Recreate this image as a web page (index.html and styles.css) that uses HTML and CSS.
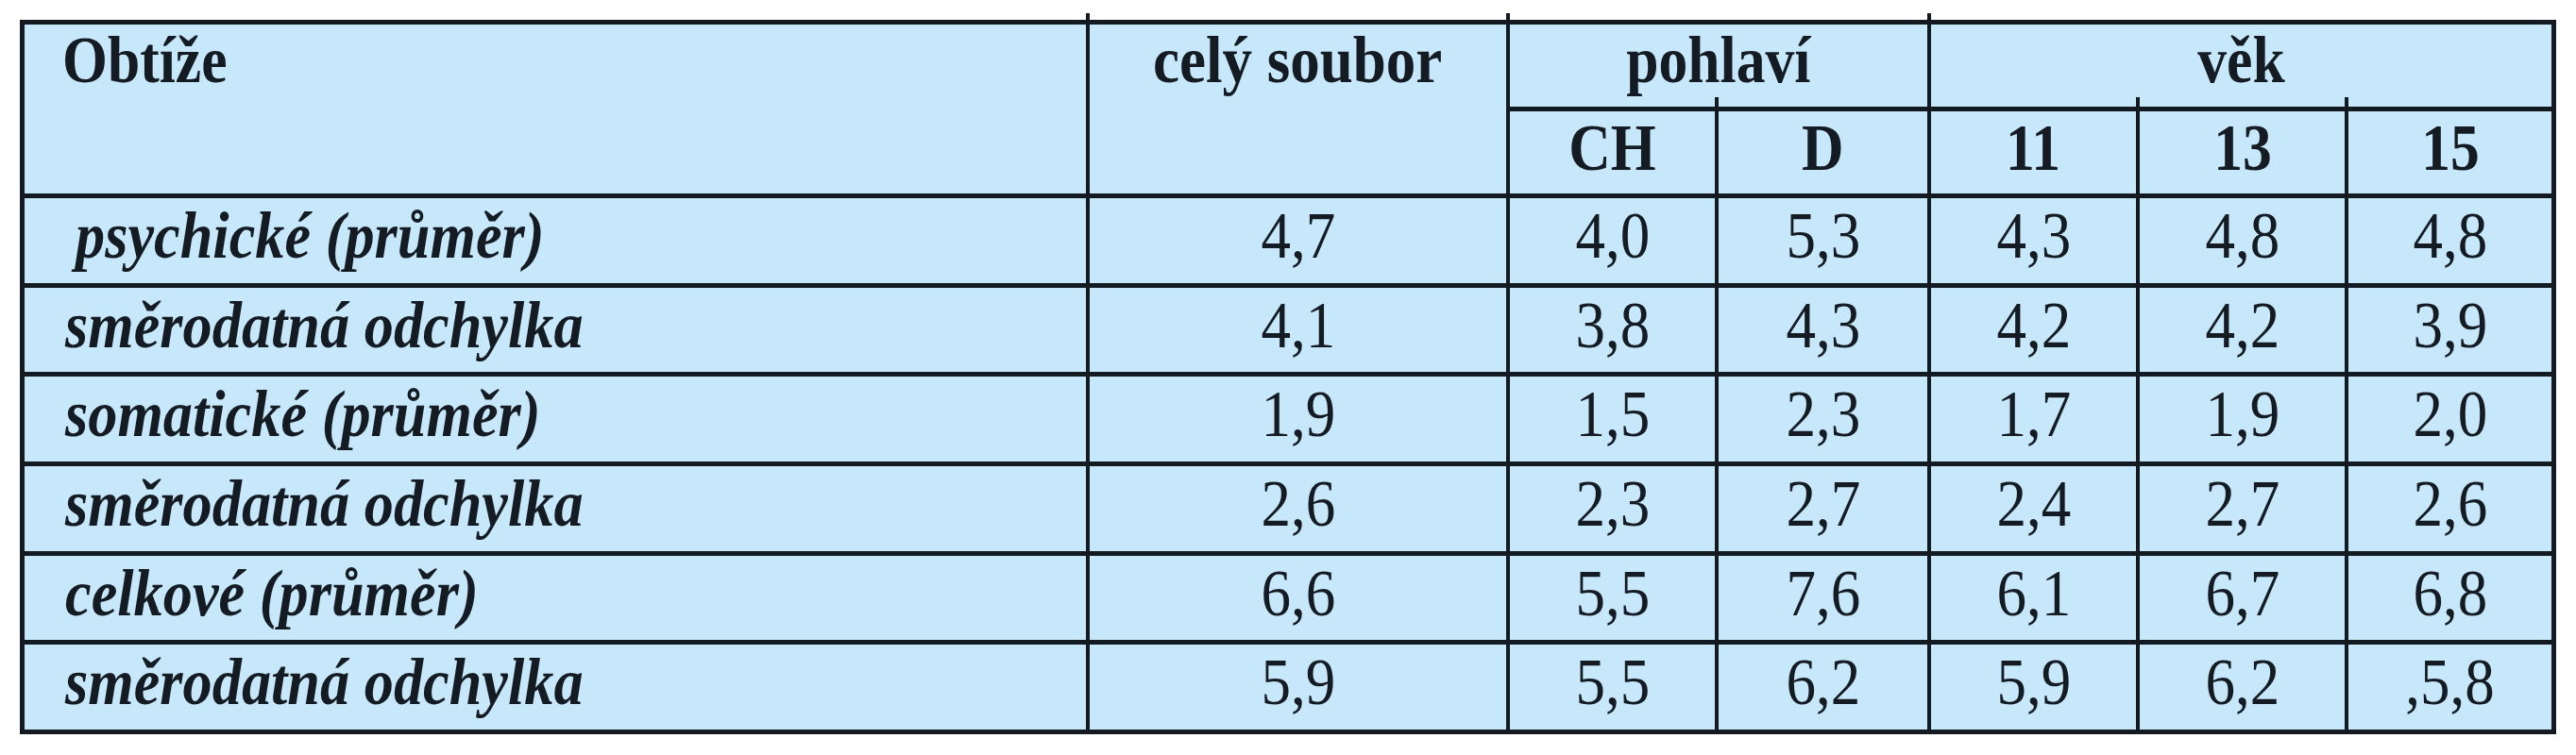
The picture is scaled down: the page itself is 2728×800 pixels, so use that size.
FILE: index.html
```html
<!DOCTYPE html>
<html lang="cs">
<head>
<meta charset="utf-8">
<title>Obtíže</title>
<link rel="stylesheet" href="styles.css">
</head>
<body>
<div class="table">
  <div class="cell head h-label"><span class="t">Obtíže</span></div>
  <div class="cell head h-total grp"><span class="t">celý soubor</span></div>
  <div class="cell head h-group g-sex grp"><span class="t">pohlaví</span></div>
  <div class="cell head h-group g-age grp"><span class="t">věk</span></div>
  <div class="cell head h-sub c3"><span class="t">CH</span></div>
  <div class="cell head h-sub c4 sub"><span class="t">D</span></div>
  <div class="cell head h-sub c5"><span class="t">11</span></div>
  <div class="cell head h-sub c6 sub"><span class="t">13</span></div>
  <div class="cell head h-sub c7 sub"><span class="t">15</span></div>

  <div class="cell label indent"><span class="t">psychické (průměr)</span></div>
  <div class="cell num"><span class="t">4,7</span></div>
  <div class="cell num"><span class="t">4,0</span></div>
  <div class="cell num"><span class="t">5,3</span></div>
  <div class="cell num"><span class="t">4,3</span></div>
  <div class="cell num"><span class="t">4,8</span></div>
  <div class="cell num"><span class="t">4,8</span></div>

  <div class="cell label"><span class="t">směrodatná odchylka</span></div>
  <div class="cell num"><span class="t">4,1</span></div>
  <div class="cell num"><span class="t">3,8</span></div>
  <div class="cell num"><span class="t">4,3</span></div>
  <div class="cell num"><span class="t">4,2</span></div>
  <div class="cell num"><span class="t">4,2</span></div>
  <div class="cell num"><span class="t">3,9</span></div>

  <div class="cell label"><span class="t">somatické (průměr)</span></div>
  <div class="cell num"><span class="t">1,9</span></div>
  <div class="cell num"><span class="t">1,5</span></div>
  <div class="cell num"><span class="t">2,3</span></div>
  <div class="cell num"><span class="t">1,7</span></div>
  <div class="cell num"><span class="t">1,9</span></div>
  <div class="cell num"><span class="t">2,0</span></div>

  <div class="cell label"><span class="t">směrodatná odchylka</span></div>
  <div class="cell num"><span class="t">2,6</span></div>
  <div class="cell num"><span class="t">2,3</span></div>
  <div class="cell num"><span class="t">2,7</span></div>
  <div class="cell num"><span class="t">2,4</span></div>
  <div class="cell num"><span class="t">2,7</span></div>
  <div class="cell num"><span class="t">2,6</span></div>

  <div class="cell label"><span class="t">celkové (průměr)</span></div>
  <div class="cell num"><span class="t">6,6</span></div>
  <div class="cell num"><span class="t">5,5</span></div>
  <div class="cell num"><span class="t">7,6</span></div>
  <div class="cell num"><span class="t">6,1</span></div>
  <div class="cell num"><span class="t">6,7</span></div>
  <div class="cell num"><span class="t">6,8</span></div>

  <div class="cell label"><span class="t">směrodatná odchylka</span></div>
  <div class="cell num last"><span class="t">5,9</span></div>
  <div class="cell num last"><span class="t">5,5</span></div>
  <div class="cell num last"><span class="t">6,2</span></div>
  <div class="cell num last"><span class="t">5,9</span></div>
  <div class="cell num last"><span class="t">6,2</span></div>
  <div class="cell num last"><span class="t">,5,8</span></div>
</div>
</body>
</html>
```

FILE: styles.css
```css
html, body {
  margin: 0;
  background: #ffffff;
}

body {
  padding: 21px 0 0 21px;
  font-family: "Liberation Serif", "Times New Roman", serif;
  color: #141b23;
}

.table {
  display: grid;
  width: max-content;
  grid-template-columns: 1124px 441px 217px 221px 217px 217px 215px;
  grid-template-rows: 87px 87px 90px 89px 90px 90px 89px 90px;
  column-gap: 4px;
  row-gap: 5px;
  padding: 5px;
  background: #131a22;
}

.cell {
  position: relative;
  box-sizing: border-box;
  background: #c7e8fa;
  display: flex;
  align-items: flex-start;
  justify-content: center;
  font-size: 70px;
  line-height: 66px;
  padding-top: 7px;
}

.t {
  display: inline-block;
  white-space: pre;
  transform: scaleX(0.9);
  transform-origin: 50% 50%;
}

/* header */
.head {
  font-weight: bold;
}

.head .t {
  transform: scaleX(0.88);
}

.h-label {
  grid-column: 1;
  grid-row: 1 / span 2;
  justify-content: flex-start;
  padding-left: 40px;
  padding-top: 5px;
}

.h-label .t {
  transform-origin: 0 50%;
}

.h-total {
  grid-column: 2;
  grid-row: 1 / span 2;
  padding-top: 5px;
}

.h-total .t {
  transform: scaleX(0.9);
}

.h-group {
  grid-row: 1;
  padding-top: 5px;
}

.g-sex {
  grid-column: 3 / span 2;
}

.g-age {
  grid-column: 5 / span 3;
}

.h-sub {
  grid-row: 2;
  padding-top: 6px;
}

.c3 { grid-column: 3; }
.c4 { grid-column: 4; }
.c5 { grid-column: 5; }
.c6 { grid-column: 6; }
.c7 { grid-column: 7; }

/* body rows */
.label {
  justify-content: flex-start;
  padding-left: 43px;
  font-weight: bold;
  font-style: italic;
}

.label .t {
  transform: scaleX(0.89);
  transform-origin: 0 50%;
}

.indent {
  padding-left: 54px;
}

.num {
  font-weight: normal;
}

/* small line overshoots of the scanned table */
.grp::before {
  content: "";
  position: absolute;
  left: -4px;
  top: -12px;
  width: 4px;
  height: 12px;
  background: #131a22;
}

.sub::before {
  content: "";
  position: absolute;
  left: -4px;
  top: -15px;
  width: 4px;
  height: 15px;
  background: #131a22;
}

.last::after {
  content: "";
  position: absolute;
  left: -4px;
  bottom: -11px;
  width: 4px;
  height: 11px;
  background: #131a22;
}
```
